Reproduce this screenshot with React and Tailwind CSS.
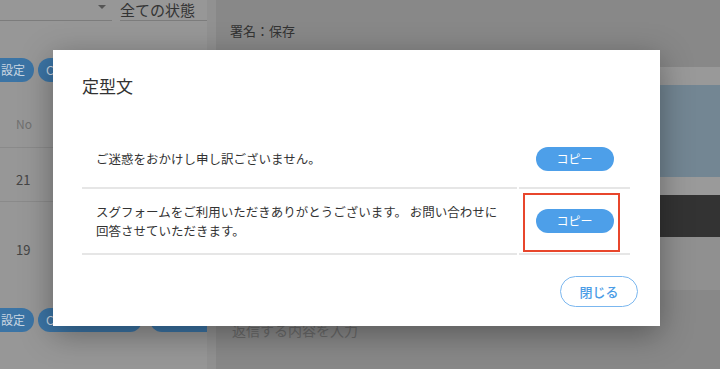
export default function App() {
  const font = { fontFamily: '"Noto Sans CJK JP", "Noto Sans", sans-serif' };
  return (
    <div className="relative w-[720px] h-[369px] overflow-hidden flex bg-[#8c8c8c]" style={font}>
      {/* left list panel */}
      <div className="w-[207px] shrink-0 bg-[#979797] flex flex-col">
        <div className="flex gap-2 h-[21px]">
          <div className="w-[112px] border-b border-[#7c7c7c] flex justify-end items-start pr-[6px] pt-[5px]">
            <div className="w-0 h-0 border-l-[4px] border-r-[4px] border-t-[4px] border-l-transparent border-r-transparent border-t-[#555]" />
          </div>
          <div className="flex-1 border-b border-[#7c7c7c] text-[15px] leading-[18px] text-[#333] pt-[1px]">全ての状態</div>
        </div>
        <div className="flex gap-[4px] mt-[37px] h-[24px]">
          <div className="w-[34px] rounded-r-full bg-[#3b74a5] text-[#c9d6e2] text-[12px] leading-[24px] pl-[1px]">設定</div>
          <div className="w-[120px] rounded-full bg-[#3b74a5] text-[#c9d6e2] text-[12px] leading-[24px] pl-[8px]">CSV</div>
        </div>
        <div className="mt-[33px] h-[33px] border-b border-[#8a8a8a] text-[12px] text-[#707070] pl-[16px] leading-[18px]">No</div>
        <div className="h-[54px] border-b border-[#8a8a8a] text-[13px] leading-[19px] text-[#444] pl-[16px] pt-[22px]">21</div>
        <div className="h-[96px] text-[13px] text-[#444] pl-[16px] flex items-center">19</div>
        <div className="flex gap-[4px] mt-[10px] h-[24px]">
          <div className="w-[34px] rounded-r-full bg-[#3b74a5] text-[#c9d6e2] text-[12px] leading-[24px] pl-[1px]">設定</div>
          <div className="w-[104px] rounded-full bg-[#3b74a5] text-[#c9d6e2] text-[12px] leading-[24px] pl-[8px]">CSV</div>
          <div className="flex-1 ml-[4px] rounded-l-full bg-[#3b74a5]" />
        </div>
      </div>
      <div className="w-[9px] shrink-0 bg-[#919191]" />
      {/* right detail panel */}
      <div className="flex-1 flex flex-col">
        <div className="h-[67px] bg-[#888] text-[13px] text-[#333] pl-[14px] pt-[21px]">署名：保存</div>
        <div className="h-[18px] bg-[#999]" />
        <div className="h-[92px] bg-[#738693]" />
        <div className="h-[18px] bg-[#9a9a9a]" />
        <div className="h-[42px] bg-[#333]" />
        <div className="h-[53px] bg-[#909090]" />
        <div className="flex-1 bg-[#888] text-[14px] text-[#6a6a6a] pl-[16px] pt-[30px]">返信する内容を入力</div>
      </div>

      {/* modal */}
      <div className="absolute left-[53px] top-[50px] w-[607px] h-[276px] bg-white shadow-[0_8px_30px_rgba(0,0,0,0.35)] flex flex-col pl-[29px] pr-[22px]">
        <div className="pt-[24px] text-[17px] leading-[24px] text-[#333]">定型文</div>
        <div className="mt-[34px] mr-[8px]">
          <div className="flex gap-[2px] h-[57px]">
            <div className="flex-1 border-b-2 border-[#e6e6e6] flex items-center pl-[14px] text-[12.5px] text-[#333]">
              ご迷惑をおかけし申し訳ございません。
            </div>
            <div className="w-[111px] border-b-2 border-[#e6e6e6] flex items-center justify-center pb-[2px]">
              <button className="w-[78px] h-[24px] rounded-full bg-[#4d9fe9] text-white text-[12px]">コピー</button>
            </div>
          </div>
          <div className="flex gap-[2px] h-[66px]">
            <div className="flex-1 border-b-2 border-[#e6e6e6] flex items-center pl-[14px] pr-[8px] text-[12.5px] leading-[19px] text-[#333]">
              <p>
                スグフォームをご利用いただきありがとうございます。 お問い合わせに
                <br />
                回答させていただきます。
              </p>
            </div>
            <div className="relative w-[111px] border-b-2 border-[#e6e6e6] flex items-center justify-center">
              <button className="w-[78px] h-[24px] rounded-full bg-[#4d9fe9] text-white text-[12px]">コピー</button>
              <div className="absolute left-[4px] top-[4px] w-[97px] h-[59px] border-2 border-[#e8462c]" />
            </div>
          </div>
        </div>
        <div className="flex justify-end mt-[21px]">
          <button className="w-[78px] h-[31px] rounded-full border border-[#7bb7ef] text-[#4a9ce6] text-[13px] font-medium">閉じる</button>
        </div>
      </div>
    </div>
  );
}
